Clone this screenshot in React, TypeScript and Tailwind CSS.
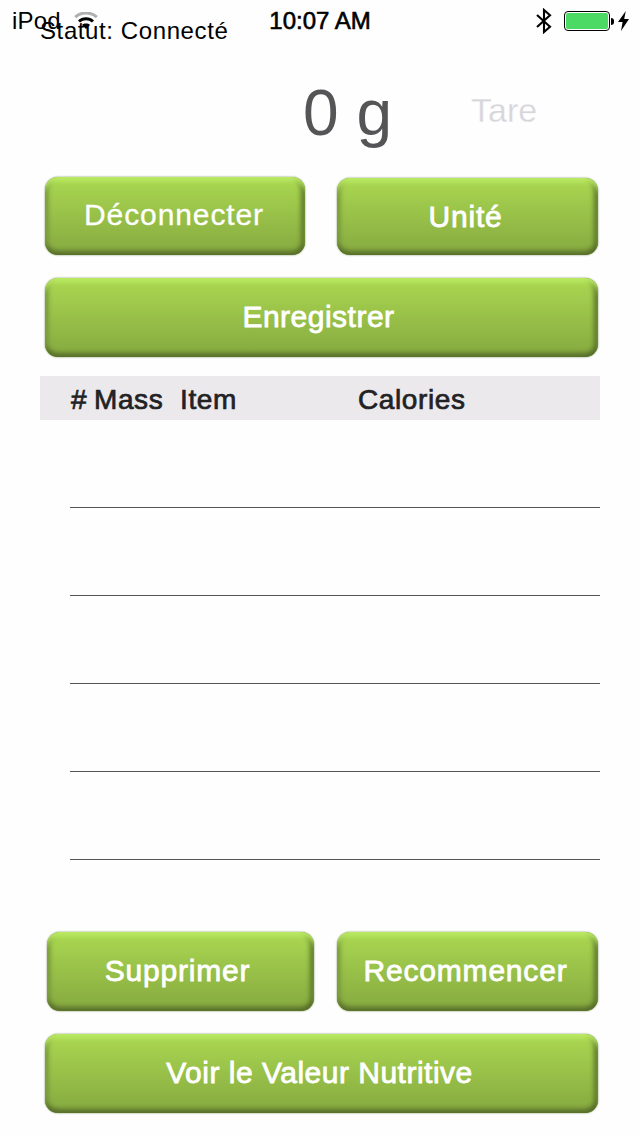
import clsx from 'clsx';

const ROWS = [1, 2, 3, 4, 5];

function StatusBar() {
  return (
    <div className="absolute inset-x-0 top-0 h-[42px] flex items-center text-2xl leading-10 text-black">
      <div className="flex-1 flex items-center pl-3">
        <span className="tracking-[0.2px]">iPod</span>
        {/* Wifi */}
        <svg className="ml-[13px] w-6 h-[18px]" viewBox="0 0 24 18" fill="none">
          <path d="M1.2 5.2C7 -.4 17 -.4 22.8 5.2" stroke="#b0b0b2" strokeWidth="3" />
          <path d="M5 9.5C9 5.8 15 5.8 19 9.5" stroke="#000" strokeWidth="3" />
          <path d="M12 17L8 13C10 11.1 14 11.1 16 13Z" fill="#000" />
        </svg>
      </div>

      <span className="[-webkit-text-stroke:0.6px_black]">10:07 AM</span>

      <div className="flex-1 flex items-center justify-end pr-3">
        {/* Bluetooth */}
        <svg className="w-4 h-[26px]" viewBox="0 0 16 26" fill="none" stroke="#000" strokeWidth="2.1">
          <path d="M1 7L14 18.8L8 24V2L14 7.2L1 19" />
        </svg>
        {/* Battery */}
        <div className="ml-3 w-[46px] h-5 rounded-[4px] border border-black p-px">
          <div className="w-full h-full rounded-[2px] bg-[#4cd964]" />
        </div>
        <div className="ml-px w-[3px] h-[7px] rounded-r-full bg-black" />
        <svg className="ml-1 -mr-px w-[11px] h-5" viewBox="0 0 11 20">
          <path d="M7.8 0L0 11H4.6L3 20L11 8H6.2Z" fill="#000" />
        </svg>
      </div>
    </div>
  );
}

type GreenButtonProps = {
  label: string;
  className?: string;
  labelClassName?: string;
};

function GreenButton({ label, className, labelClassName }: GreenButtonProps) {
  return (
    <button
      className={clsx(
        'flex items-center justify-center rounded-[13px] text-white text-[30px] leading-none whitespace-nowrap',
        'bg-gradient-to-b from-[#aad851] to-[#86a940]',
        'shadow-[inset_0_6px_5px_-2px_#bdec66,inset_0_-6px_5px_-2px_#586f2b,inset_5px_0_5px_-2px_#73923a,inset_-6px_0_5px_-2px_#5c772c,0_0_2px_#6f8850]',
        className,
      )}
    >
      <span className={clsx(labelClassName ?? 'tracking-[0.8px] [-webkit-text-stroke:0.8px_white]')}>{label}</span>
    </button>
  );
}

export default function App() {
  return (
    <div className="relative w-[640px] h-[1136px] overflow-hidden bg-[#fefefe] font-['Liberation_Sans',Arial,sans-serif]">
      <main className="flex flex-col pt-[11px]">
        <p className="pl-10 h-10 text-2xl leading-10 tracking-[0.6px] text-black">Statut: Connecté</p>

        {/* Weight */}
        <div className="mt-[23px] flex h-20 pl-[303px]">
          <span className="w-[168px] text-[64px] leading-[78px] text-[#555456]">0 g</span>
          <span className="text-[34px] leading-[72px] text-[#d6d5da] [-webkit-text-stroke:0.3px_#fefefe]">Tare</span>
        </div>

        <div className="mt-[23px] flex items-end pl-[45px] gap-8">
          <GreenButton
            label="Déconnecter"
            className="w-[260px] h-[78px] pb-0.5 pr-0.5"
            labelClassName="tracking-[0.9px] [-webkit-text-stroke:0.3px_white]"
          />
          <GreenButton label="Unité" className="w-[261px] h-[77px] pr-1" />
        </div>
        <GreenButton
          label="Enregistrer"
          className="mt-[23px] ml-[45px] w-[553px] h-[79px] pr-1.5 pb-0.5"
          labelClassName="tracking-[0.5px] [-webkit-text-stroke:0.8px_white]"
        />

        {/* Table */}
        <section className="mt-[19px] mx-10">
          <div className="flex h-11 bg-[#ebe9ec] pl-[31px] text-[28px] leading-[47px] tracking-[0.6px] text-[#222124] [-webkit-text-stroke:0.7px_#222124]">
            <span className="w-[23px]">#</span>
            <span className="w-[86px]">Mass</span>
            <span className="w-[178px]">Item</span>
            <span>Calories</span>
          </div>
          {ROWS.map((row) => (
            <div key={row} className="ml-[30px] h-[88px] border-b border-[#555]" />
          ))}
        </section>

        <div className="mt-[72px] flex pl-[47px] gap-[23px]">
          <GreenButton label="Supprimer" className="w-[267px] h-[79px] pr-1.5 pb-px" />
          <GreenButton label="Recommencer" className="w-[261px] h-[79px] pr-1 pb-px" />
        </div>
        <GreenButton
          label="Voir le Valeur Nutritive"
          className="mt-[23px] ml-[45px] w-[553px] h-[79px] pr-1 pb-px"
          labelClassName="tracking-[0.5px] [-webkit-text-stroke:0.8px_white]"
        />
      </main>

      <StatusBar />
    </div>
  );
}
